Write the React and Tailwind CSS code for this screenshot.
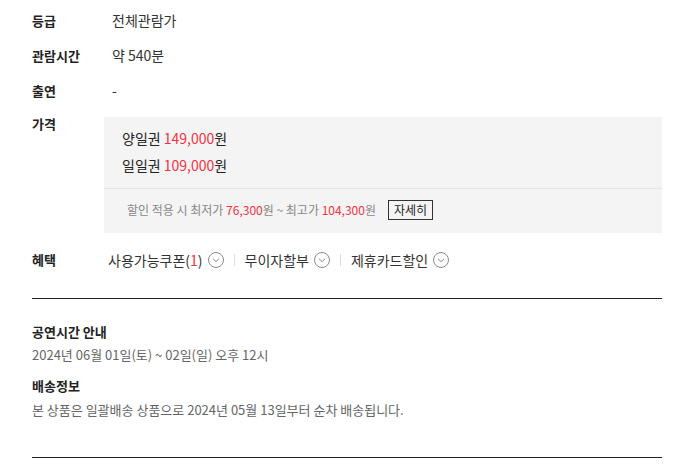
import React from 'react';

const Chevron = () => (
  <svg width="16" height="16" viewBox="0 0 16 16" className="shrink-0">
    <circle cx="8" cy="8" r="7.5" fill="none" stroke="#8a8a8a" strokeWidth="1" />
    <path d="M5 6.8 L8 9.6 L11 6.8" fill="none" stroke="#8a8a8a" strokeWidth="1" />
  </svg>
);

const Row = ({ label, children }) => (
  <div className="flex items-start h-[35px]">
    <div className="w-[80px] text-[13px] font-bold text-[#222] leading-[20px] pt-[11px]">{label}</div>
    <div className="text-[14px] text-[#333] leading-[20px] pt-[10px]">{children}</div>
  </div>
);

const App = () => {
  return (
    <div
      className="w-[678px] h-[464px] bg-white px-[32px] pt-0"
      style={{ fontFamily: '"Noto Sans CJK KR", "Noto Sans", sans-serif' }}
    >
      <div className="w-[630px]">
        <Row label="등급">전체관람가</Row>
        <Row label="관람시간">약 540분</Row>
        <Row label="출연">-</Row>

        <div className="flex items-start mt-[12px]">
          <div className="w-[72px] text-[13px] font-bold text-[#222] leading-[20px] -mt-[3px]">가격</div>
          <div className="flex-1 bg-[#f4f4f4] h-[116px] flex flex-col">
            <div className="px-[18px] pt-[8px] h-[72px] border-b border-[#e6e6e6] text-[14px] text-[#222] leading-[27px]">
              <div>양일권 <span className="text-[#f43142]">149,000</span>원</div>
              <div>일일권 <span className="text-[#f43142]">109,000</span>원</div>
            </div>
            <div className="flex items-center pl-[23px] pt-[11px] text-[12px] text-[#888]">
              <span>
                할인 적용 시 최저가 <span className="text-[#f43142]">76,300</span>원 ~ 최고가{' '}
                <span className="text-[#f43142]">104,300</span>원
              </span>
              <span className="ml-[12px] border border-[#333] text-[#222] px-[5px] h-[20px] leading-[18px] text-[12px]">
                자세히
              </span>
            </div>
          </div>
        </div>

        <div className="flex items-center h-[54px]">
          <div className="w-[76px] text-[13px] font-bold text-[#222]">혜택</div>
          <div className="flex items-center text-[14px] text-[#333]">
            <span>사용가능쿠폰(<span className="text-[#f43142]">1</span>)</span>
            <span className="ml-[5px]"><Chevron /></span>
            <span className="mx-[10px] w-px h-[12px] bg-[#ddd]" />
            <span>무이자할부</span>
            <span className="ml-[5px]"><Chevron /></span>
            <span className="mx-[10px] w-px h-[12px] bg-[#ddd]" />
            <span>제휴카드할인</span>
            <span className="ml-[5px]"><Chevron /></span>
          </div>
        </div>

        <div className="border-t border-[#222] mt-[11px] pt-[23px] pb-[37px] border-b">
          <div className="text-[13px] font-bold text-[#222] leading-[20px]">공연시간 안내</div>
          <div className="text-[13px] text-[#666] leading-[20px] mt-[3px]">2024년 06월 01일(토) ~ 02일(일) 오후 12시</div>
          <div className="text-[13px] font-bold text-[#222] leading-[20px] mt-[11px]">배송정보</div>
          <div className="text-[13px] text-[#666] leading-[20px] mt-[4px]">
            본 상품은 일괄배송 상품으로 2024년 05월 13일부터 순차 배송됩니다.
          </div>
        </div>
      </div>
    </div>
  );
};

export default App;
